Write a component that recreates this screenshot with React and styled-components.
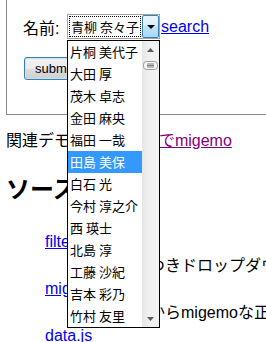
import React from 'react';
import styled, { createGlobalStyle } from 'styled-components';

const GlobalStyle = createGlobalStyle`
  html, body { margin: 0; padding: 0; background: #fff; overflow: hidden; }
  body {
    font-family: "Liberation Sans", "Noto Sans CJK JP", sans-serif;
    font-size: 16px;
    color: #000;
  }
`;

const Page = styled.div`
  position: relative;
  width: 266px;
  height: 342px;
  overflow: hidden;
  padding-left: 6px;
  box-sizing: border-box;
`;

const FormBox = styled.form`
  box-sizing: border-box;
  height: 115px;
  width: 330px;
  margin: 0;
  border: 1px solid #878787;
  border-top: none;
  padding: 14px 0 0 16px;
`;

const Row = styled.div`
  display: flex;
  align-items: center;
  height: ${(p) => p.$h || 25}px;
  margin-top: ${(p) => p.$mt || 0}px;
`;

const Label = styled.label`
  width: 44px;
  flex: none;
  font-size: 16px;
  white-space: nowrap;
`;

const SelectBox = styled.div`
  box-sizing: border-box;
  width: 93px;
  height: 25px;
  flex: none;
  border: 1px solid #a3a3a3;
  display: flex;
  align-items: stretch;
  background: #fff;
`;

const SelectValue = styled.div`
  flex: 1;
  margin: 1px;
  border: 1px dotted #000;
  font-family: "Noto Sans CJK JP", sans-serif;
  font-size: 13px;
  line-height: 19px;
  padding-left: 1px;
  white-space: nowrap;
  overflow: hidden;
`;

const ArrowButton = styled.div`
  box-sizing: border-box;
  width: 17px;
  flex: none;
  border: 1px solid #3c7fb1;
  border-radius: 2px;
  background: linear-gradient(#eaf6fd 0%, #d9f0fc 45%, #bee6fd 50%, #a7d9f5 100%);
  display: flex;
  align-items: center;
  justify-content: center;
  &::after {
    content: "";
    border-left: 4px solid transparent;
    border-right: 4px solid transparent;
    border-top: 4px solid #000;
    margin-top: 1px;
  }
`;

const Link = styled.a`
  color: ${(p) => (p.$visited ? '#800080' : '#0000ee')};
  text-decoration: underline;
  white-space: nowrap;
  margin-left: ${(p) => p.$ml || 0}px;
`;

const SubmitButton = styled.button`
  box-sizing: border-box;
  height: 23px;
  margin-left: 1px;
  padding: 0 10px;
  font-family: "Liberation Sans", sans-serif;
  font-size: 13px;
  color: #000;
  border: 1px solid #3c7fb1;
  border-radius: 3px;
  background: linear-gradient(#f2f2f2 0%, #ebebeb 50%, #dddddd 51%, #cfcfcf 100%);
  box-shadow: inset 0 0 0 1px #bfe4f8;
`;

const Related = styled.p`
  margin: 15px 0 0;
  height: 22px;
  line-height: 22px;
  white-space: nowrap;
`;

const Heading = styled.h2`
  margin: 23px 0 0;
  height: 30px;
  line-height: 30px;
  font-size: 24px;
  font-weight: bold;
  white-space: nowrap;
`;

const SourceList = styled.dl`
  margin: 25px 0 0;
  padding-left: 39px;
`;

const Term = styled.dt`
  height: 24px;
  line-height: 24px;
  white-space: nowrap;
`;

const Desc = styled.dd`
  margin: 0 0 0 40px;
  height: 23px;
  line-height: 23px;
  white-space: nowrap;
`;

const Dropdown = styled.div`
  position: absolute;
  left: 67px;
  top: 40px;
  width: 93px;
  height: 288px;
  box-sizing: border-box;
  border: 1px solid #000;
  background: #fff;
  display: flex;
`;

const Options = styled.ul`
  flex: 1;
  margin: 0;
  padding: 0;
  list-style: none;
`;

const Option = styled.li`
  height: 22px;
  line-height: 22px;
  padding-left: 2px;
  font-family: "Noto Sans CJK JP", sans-serif;
  font-size: 13px;
  white-space: nowrap;
  overflow: hidden;
  background: ${(p) => (p.$active ? '#3399ff' : 'transparent')};
  color: ${(p) => (p.$active ? '#fff' : '#000')};
`;

const Scrollbar = styled.div`
  width: 17px;
  flex: none;
  display: flex;
  flex-direction: column;
  background: linear-gradient(90deg, #e6e6e6 0%, #f0f0f0 40%, #f3f3f3 100%);
`;

const ScrollArrow = styled.div`
  height: 17px;
  flex: none;
  display: flex;
  align-items: center;
  justify-content: center;
`;

const Thumb = styled.div`
  height: 14px;
  flex: none;
  display: flex;
  align-items: center;
  justify-content: center;
`;

const Track = styled.div`
  flex: 1;
`;

const names = [
  '片桐 美代子',
  '大田 厚',
  '茂木 卓志',
  '金田 麻央',
  '福田 一哉',
  '田島 美保',
  '白石 光',
  '今村 淳之介',
  '西 瑛士',
  '北島 淳',
  '工藤 沙紀',
  '吉本 彩乃',
  '竹村 友里',
];

export default function App() {
  return (
    <>
      <GlobalStyle />
      <Page>
        <FormBox onSubmit={(e) => e.preventDefault()}>
          <Row>
            <Label>名前:</Label>
            <SelectBox>
              <SelectValue>青柳 奈々子</SelectValue>
              <ArrowButton />
            </SelectBox>
            <Link href="#" $ml={1}>search</Link>
          </Row>
          <Row $h={23} $mt={18}>
            <SubmitButton type="submit">submit</SubmitButton>
          </Row>
        </FormBox>
        <Related>
          関連デモ: <Link href="#" $visited>補完入力欄でmigemo</Link>
        </Related>
        <Heading>ソースコード</Heading>
        <SourceList>
          <Term><Link href="#">filter-select.js</Link></Term>
          <Desc>絞り込みつきドロップダウン</Desc>
          <Term><Link href="#">migemo.js</Link></Term>
          <Desc>ローマ字からmigemoな正規表現を生成</Desc>
          <Term><Link href="#">data.js</Link></Term>
        </SourceList>
        <Dropdown>
          <Options>
            {names.map((n) => (
              <Option key={n} $active={n === '田島 美保'}>{n}</Option>
            ))}
          </Options>
          <Scrollbar>
            <ScrollArrow>
              <svg width="7" height="4" viewBox="0 0 7 4"><path d="M0 4 L3.5 0 L7 4 Z" fill="#5a5a5a" /></svg>
            </ScrollArrow>
            <Thumb>
              <svg width="15" height="9" viewBox="0 0 15 9">
                <rect x="0.5" y="0.5" width="14" height="8" rx="3" fill="#f4f4f4" stroke="#9a9a9a" />
                <path d="M4 3 H11 M4 4.5 H11 M4 6 H11" stroke="#7d7d7d" strokeWidth="1" />
              </svg>
            </Thumb>
            <Track />
            <ScrollArrow>
              <svg width="7" height="4" viewBox="0 0 7 4"><path d="M0 0 L3.5 4 L7 0 Z" fill="#5a5a5a" /></svg>
            </ScrollArrow>
          </Scrollbar>
        </Dropdown>
      </Page>
    </>
  );
}
